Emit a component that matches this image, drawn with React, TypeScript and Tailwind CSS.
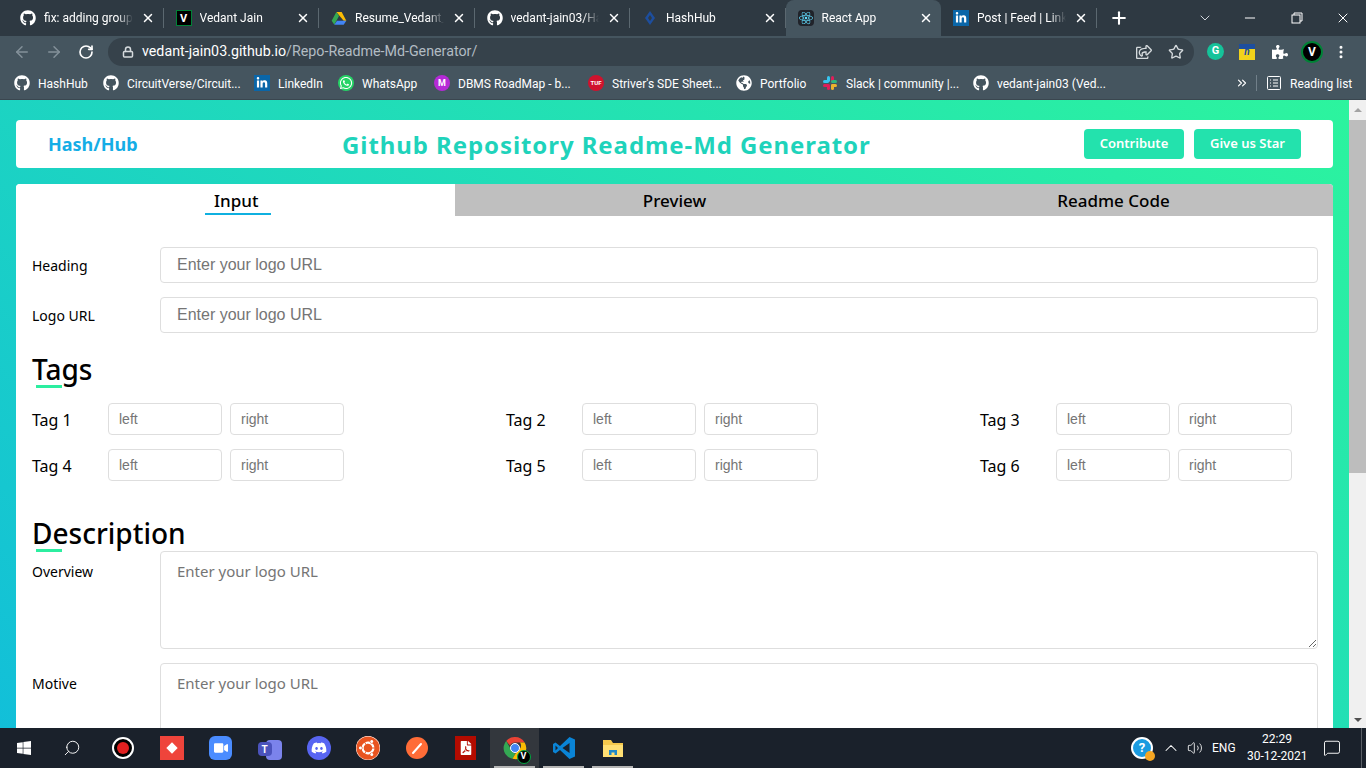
import React from 'react';
import { ArrowLeft, ArrowRight, RotateCw, Star, EllipsisVertical, Plus, Minus, X, ChevronDown, ChevronUp, Volume2, Search, Lock, ChevronsRight, MessageSquare } from 'lucide-react';
import { FaGithub, FaLinkedinIn, FaWhatsapp, FaWindows, FaDiscord, FaUbuntu, FaReact, FaPuzzlePiece, FaGlobeAmericas, FaFilePdf, FaVideo, FaRegShareSquare } from 'react-icons/fa';

const UI = "font-['Noto_Sans','Open_Sans',sans-serif]";
const CHROME_FONT = "font-['Roboto','Noto_Sans',sans-serif]";

const VLogo = ({ size = 16 }: { size?: number }) => (
  <span
    className="flex items-center justify-center bg-black border border-green-700 text-white font-bold text-[11px] leading-none shrink-0"
    style={{ width: size, height: size }}
  >
    V
  </span>
);

const Drive = () => (
  <svg viewBox="0 0 24 24" className="w-4 h-4 shrink-0">
    <polygon points="8,3 16,3 23,16 19,16" fill="#fbbc04" />
    <polygon points="8,3 1,16 5,22 12,9" fill="#34a853" />
    <polygon points="5,22 19,22 23,16 9,16" fill="#4285f4" />
  </svg>
);

const Hash = () => (
  <svg viewBox="0 0 16 16" className="w-4 h-4 shrink-0">
    <polygon points="8,1 13,8 8,15 3,8" fill="#1d4e9e" />
    <polygon points="8,5 10,8 8,11 6,8" fill="#2f3b44" />
  </svg>
);

const Linked = () => (
  <span className="w-4 h-4 bg-[#0a66a8] flex items-center justify-center shrink-0">
    <FaLinkedinIn className="w-3 h-3 text-white" />
  </span>
);

const tabs = [
  { icon: <FaGithub className="w-4 h-4 text-white shrink-0" />, title: 'fix: adding group chat' },
  { icon: <VLogo />, title: 'Vedant Jain' },
  { icon: <Drive />, title: 'Resume_Vedant_Jain' },
  { icon: <FaGithub className="w-4 h-4 text-white shrink-0" />, title: 'vedant-jain03/HashHub' },
  { icon: <Hash />, title: 'HashHub' },
  { icon: <span className="w-4 h-4 bg-[#20232a] rounded-sm flex items-center justify-center shrink-0"><FaReact className="w-3.5 h-3.5 text-[#61dafb]" /></span>, title: 'React App', active: true },
  { icon: <Linked />, title: 'Post | Feed | LinkedIn' },
];

const Slack = () => (
  <svg viewBox="0 0 16 16" className="w-4 h-4 shrink-0">
    <rect x="5" y="1" width="3" height="6" rx="1.5" fill="#36c5f0" />
    <rect x="1" y="5" width="6" height="3" rx="1.5" fill="#36c5f0" />
    <rect x="9" y="1" width="3" height="6" rx="1.5" fill="#e01e5a" />
    <rect x="9" y="5" width="6" height="3" rx="1.5" fill="#2eb67d" />
    <rect x="1" y="9" width="6" height="3" rx="1.5" fill="#e01e5a" />
    <rect x="5" y="9" width="3" height="6" rx="1.5" fill="#e01e5a" />
    <rect x="9" y="9" width="6" height="3" rx="1.5" fill="#ecb22e" />
    <rect x="9" y="9" width="3" height="6" rx="1.5" fill="#ecb22e" />
  </svg>
);

const GH = <FaGithub className="w-4 h-4 text-white shrink-0" />;

const bookmarks = [
  { icon: GH, label: 'HashHub', w: 'w-[89px]' },
  { icon: GH, label: 'CircuitVerse/Circuit...', w: 'w-[151px]' },
  { icon: <Linked />, label: 'LinkedIn', w: 'w-[84px]' },
  { icon: <span className="w-4 h-4 rounded-full bg-[#25d366] flex items-center justify-center shrink-0"><FaWhatsapp className="w-3.5 h-3.5 text-white" /></span>, label: 'WhatsApp', w: 'w-[96px]' },
  { icon: <span className="w-4 h-4 rounded-full bg-[#b52ad6] text-white text-[9px] font-bold flex items-center justify-center shrink-0">M</span>, label: 'DBMS RoadMap - b...', w: 'w-[154px]' },
  { icon: <span className="w-4 h-4 rounded-full bg-[#d0122d] text-white text-[6px] font-bold flex items-center justify-center shrink-0">TUF</span>, label: "Striver's SDE Sheet...", w: 'w-[148px]' },
  { icon: <FaGlobeAmericas className="w-4 h-4 text-white shrink-0" />, label: 'Portfolio', w: 'w-[86px]' },
  { icon: <Slack />, label: 'Slack | community |...', w: 'w-[151px]' },
  { icon: GH, label: 'vedant-jain03 (Ved...', w: 'w-[140px]' },
];

const BrowserChrome = () => (
  <div className={`${CHROME_FONT} text-white shrink-0`}>
    {/* Tab strip */}
    <div className="h-9 bg-[#2e3942] flex items-center pl-2">
      {tabs.map((tab) => (
        <div
          key={tab.title}
          className={`w-[155.5px] h-9 pl-3 pr-2 flex items-center gap-2 shrink-0 ${tab.active ? 'bg-[#45555f] rounded-t-lg' : 'border-r border-[#5b6870] h-[20px]'}`}
        >
          {tab.icon}
          <span className="flex-1 overflow-hidden whitespace-nowrap text-xs pb-px [mask-image:linear-gradient(to_left,transparent,black_16px)]">{tab.title}</span>
          <X className="w-3.5 h-3.5 shrink-0" strokeWidth={2.5} />
        </div>
      ))}
      <Plus className="w-5 h-5 ml-3 shrink-0" strokeWidth={2.5} />
      <div className="ml-auto flex items-center">
        <ChevronDown className="w-4 h-4 mr-[29px] text-gray-300" strokeWidth={1.5} />
        <Minus className="w-4 h-4 mr-[33px]" strokeWidth={1.5} />
        <svg viewBox="0 0 12 12" className="w-3 h-3 mr-[32px]" fill="none" stroke="white">
          <rect x="1" y="3" width="8" height="8" />
          <path d="M3 3V1h8v8H9" />
        </svg>
        <X className="w-4 h-4 mr-[15px]" strokeWidth={1.5} />
      </div>
    </div>

    {/* Toolbar */}
    <div className="h-[31px] bg-[#45555f] flex items-center">
      <ArrowLeft className="w-[18px] h-[18px] ml-[13px] text-[#84919a]" />
      <ArrowRight className="w-[18px] h-[18px] ml-[14px] text-[#84919a]" />
      <RotateCw className="w-4 h-4 ml-[15px]" strokeWidth={2.5} />
      <div className="ml-[14px] w-[1086px] h-[28px] rounded-full bg-[#36424b] flex items-center pl-[14px] pr-[10px]">
        <Lock className="w-3 h-3 text-[#d5dadd]" strokeWidth={3} />
        <span className="ml-[8px] text-[14.25px]">vedant-jain03.github.io<span className="text-[#b2bcc3]">/Repo-Readme-Md-Generator/</span></span>
        <FaRegShareSquare className="w-4 h-4 ml-auto text-[#d5dadd]" />
        <Star className="w-4 h-4 ml-[16px] text-[#d5dadd]" />
      </div>
      <span className="ml-[13px] w-[17px] h-[17px] rounded-full bg-[#15c39a] text-white text-[11px] font-bold flex items-center justify-center">G</span>
      <span className="ml-[15px] w-4 h-4 bg-[linear-gradient(#1d4e9e_30%,#f2d31b_30%)] text-[#1d4e9e] text-[10px] italic font-bold flex items-center justify-center">n</span>
      <FaPuzzlePiece className="ml-[17px] w-4 h-4 text-white" />
      <span className="ml-[13px] w-[22px] h-[22px] rounded-full bg-black border-2 border-green-700 text-white text-xs font-bold flex items-center justify-center">V</span>
      <EllipsisVertical className="ml-[10px] w-4 h-4" strokeWidth={2.5} />
    </div>

    {/* Bookmarks */}
    <div className="h-[33px] bg-[#45555f] flex items-center pl-[14px] text-xs border-b border-[#3a464f]">
      {bookmarks.map((b) => (
        <div key={b.label} className={`${b.w} flex items-center gap-2 shrink-0 whitespace-nowrap`}>
          {b.icon}
          <span className="pt-px">{b.label}</span>
        </div>
      ))}
      <ChevronsRight className="w-3.5 h-3.5 ml-[122px]" />
      <div className="w-px h-4 bg-[#71808a] ml-[7px]" />
      <svg viewBox="0 0 14 14" className="w-[14px] h-[14px] ml-[10px]" fill="none" stroke="white">
        <rect x="0.5" y="0.500" width="13" height="13" rx="1" />
        <path d="M3 4h1M6 4h5M3 7h1M6 7h5M3 10h1M6 10h5" />
      </svg>
      <span className="ml-[9px] pt-px whitespace-nowrap">Reading list</span>
    </div>
  </div>
);

const fieldInput = "flex-1 h-9 min-w-0 rounded border border-[#dedede] bg-white px-4 text-base font-['Liberation_Sans',sans-serif] placeholder:text-[#757575] outline-none";
const tagInput = "w-[114px] h-8 rounded border border-[#dedede] bg-white px-[10px] text-sm font-['Liberation_Sans',sans-serif] placeholder:text-[#757575] outline-none";
const area = "flex-1 min-w-0 h-[98px] rounded border border-[#dedede] bg-white px-4 py-2 text-[15px] placeholder:text-[#757575] outline-none block";

const SectionTitle = ({ children }: { children: React.ReactNode }) => (
  <h2 className="relative text-[28px] leading-[38px] font-medium text-black">
    {children}
    <span className="absolute left-1 bottom-0 w-[26px] h-[3px] bg-[#2ceea0]" />
  </h2>
);

const TagField = ({ n }: { n: number }) => (
  <div className="flex items-center">
    <span className="w-[76px] text-base text-black pt-[2px]">Tag {n}</span>
    <input className={tagInput} placeholder="left" />
    <input className={`${tagInput} ml-2`} placeholder="right" />
  </div>
);

const Page = () => (
  <div className={`${UI} flex-1 min-h-0 flex overflow-hidden`}>
    <div className="flex-1 min-w-0 px-4 pt-5 bg-[linear-gradient(36deg,#12bfd9,#2cf49e)] overflow-hidden">
      {/* Navbar */}
      <div className="h-12 w-[1317px] bg-white rounded flex items-center pl-8">
        <span className="text-lg font-bold text-[#15ade6] w-[294px]">Hash/Hub</span>
        <span className="text-2xl font-bold text-[#1fd3bb] tracking-[0.92px] whitespace-nowrap pt-0.5">Github Repository Readme-Md Generator</span>
        <div className="ml-auto flex gap-[10px] pr-8">
          <button className="w-[100px] h-[30px] rounded-sm bg-[#23e2ad] text-white text-[13px] font-semibold">Contribute</button>
          <button className="w-[107px] h-[30px] rounded-sm bg-[#23e2ad] text-white text-[13px] font-semibold">Give us Star</button>
        </div>
      </div>

      {/* Card */}
      <div className="mt-4 w-[1317px] bg-white rounded-t">
        <div className="grid grid-cols-3 h-8 text-[17px] font-medium text-black rounded-t overflow-hidden">
          <div className="flex justify-center items-center bg-white">
            <span className="relative w-[66px] ml-[5px] pl-[9px] pt-px leading-8">
              Input
              <span className="absolute left-0 right-0 bottom-[2px] h-0.5 bg-[#0fb0e0]" />
            </span>
          </div>
          <div className="flex justify-center items-center bg-[#bfbfbf] pt-px">Preview</div>
          <div className="flex justify-center items-center bg-[#bfbfbf] pt-px">Readme Code</div>
        </div>

        <div className="pl-4 pr-[15px] pt-[31px]">
          <div className="flex items-center">
            <span className="w-32 text-sm text-black pt-[2px]">Heading</span>
            <input className={fieldInput} placeholder="Enter your logo URL" />
          </div>
          <div className="flex items-center mt-[14px]">
            <span className="w-32 text-sm text-black pt-[2px]">Logo URL</span>
            <input className={fieldInput} placeholder="Enter your logo URL" />
          </div>

          <div className="mt-[17px]">
            <SectionTitle>Tags</SectionTitle>
          </div>
          <div className="grid grid-cols-[474px_474px_1fr] gap-y-[14px] mt-[15px]">
            {[1, 2, 3, 4, 5, 6].map((n) => (
              <TagField key={n} n={n} />
            ))}
          </div>

          <div className="mt-[33px]">
            <SectionTitle>Description</SectionTitle>
          </div>
          <div className="flex -mt-[1px]">
            <span className="w-32 text-sm text-black pt-[11px]">Overview</span>
            <textarea className={area} placeholder="Enter your logo URL" />
          </div>
          <div className="flex mt-[14px]">
            <span className="w-32 text-sm text-black pt-[11px]">Motive</span>
            <textarea className={area} placeholder="Enter your logo URL" />
          </div>
        </div>
      </div>
    </div>

    {/* Scrollbar */}
    <div className="w-[17px] shrink-0 bg-[#f0f0f0] flex flex-col items-center">
      <div className="h-[20px] flex items-center justify-center">
        <div className="w-0 h-0 border-x-[4px] border-x-transparent border-b-[4px] border-b-[#a3a3a3]" />
      </div>
      <div className="w-full h-[353px] bg-[#bdbdbd]" />
      <div className="mt-auto h-[17px] flex items-center justify-center">
        <div className="w-0 h-0 border-x-[4px] border-x-transparent border-t-[4px] border-t-[#505050]" />
      </div>
    </div>
  </div>
);

const TaskBtn = ({ children, active, line }: { children: React.ReactNode; active?: boolean; line?: boolean }) => (
  <div className={`relative w-[49px] h-10 flex items-center justify-center shrink-0 ${active ? 'bg-[#33373d]' : ''}`}>
    {children}
    {line && <span className="absolute bottom-0 left-1 right-1 h-0.5 bg-[#b5b5b5]" />}
  </div>
);

const Chrome = () => (
  <svg viewBox="0 0 24 24" className="w-6 h-6">
    <path d="M12 1a11 11 0 0 1 9.6 5.5H12a5.5 5.5 0 0 0-5 3L3.2 4.9A11 11 0 0 1 12 1z" fill="#ea4335" />
    <path d="M3.2 4.9 8 13.5a5.5 5.5 0 0 0 4.5 4l-3 5.3A11 11 0 0 1 3.2 4.9z" fill="#34a853" />
    <path d="M21.6 6.5A11 11 0 0 1 9.500 22.800l4.500-7.800a5.500 5.500 0 0 0 3-8.500z" fill="#fbbc04" />
    <circle cx="12" cy="12" r="4.500" fill="#4285f4" stroke="white" />
  </svg>
);

const Taskbar = () => (
  <div className={`${CHROME_FONT} h-10 shrink-0 bg-[#1a212b] flex items-center text-white`}>
    <div className="w-12 flex justify-center"><FaWindows className="w-4 h-4" /></div>
    <div className="w-12 flex justify-center"><Search className="w-[18px] h-[18px] -scale-x-100" strokeWidth={1.25} /></div>
    <div className="w-0.5" />
    <TaskBtn><span className="w-[22px] h-[22px] rounded-full border-2 border-white bg-black flex items-center justify-center"><span className="w-3 h-3 rounded-full bg-[#e02020]" /></span></TaskBtn>
    <TaskBtn><span className="w-6 h-6 bg-[#ef443b] flex items-center justify-center"><span className="w-2 h-2 rotate-45 bg-white" /></span></TaskBtn>
    <TaskBtn><span className="w-[23px] h-6 rounded-md bg-[#4a8cff] flex items-center justify-center"><FaVideo className="w-3.5 h-3.5 text-white" /></span></TaskBtn>
    <TaskBtn><span className="relative w-6 h-6"><span className="absolute right-0 top-1 w-4 h-5 rounded bg-[#7b83eb]" /><span className="absolute left-0 top-1.5 w-3.5 h-3.5 rounded-sm bg-[#4b53bc] text-[10px] font-bold flex items-center justify-center">T</span></span></TaskBtn>
    <TaskBtn><span className="w-6 h-6 rounded-full bg-[#5865f2] flex items-center justify-center"><FaDiscord className="w-4 h-4" /></span></TaskBtn>
    <TaskBtn><span className="w-6 h-6 rounded-full bg-[#e95420] flex items-center justify-center"><FaUbuntu className="w-6 h-6 text-[#e95420] bg-white rounded-full" /></span></TaskBtn>
    <TaskBtn>
      <span className="w-[22px] h-[22px] rounded-full bg-[#ff6c37] flex items-center justify-center">
        <svg viewBox="0 0 16 16" className="w-4 h-4"><path d="M4 13 12 4" stroke="white" strokeWidth="2" strokeLinecap="round" /></svg>
      </span>
    </TaskBtn>
    <TaskBtn><span className="w-[21px] h-6 bg-[#b30b00] flex items-center justify-center"><FaFilePdf className="w-3.5 h-3.5 text-white" /></span></TaskBtn>
    <TaskBtn active line>
      <span className="relative">
        <Chrome />
        <span className="absolute -right-1 -bottom-1 w-[14px] h-[14px] rounded-full bg-black border border-green-600 text-[9px] font-bold flex items-center justify-center">V</span>
      </span>
    </TaskBtn>
    <TaskBtn line>
      <svg viewBox="0 0 24 24" className="w-6 h-6">
        <path d="M17.500 1 8 10 3.500 6.500 1 8v8l2.500 1.500L8 14l9.500 9 5.500-2.500v-17z" fill="#0a84d6" />
        <path d="M17.500 7v10L10.500 12z" fill="#1a212b" />
        <path d="M3.500 9.500 6 12l-2.500 2.500z" fill="#1a212b" />
      </svg>
    </TaskBtn>
    <TaskBtn line>
      <svg viewBox="0 0 24 24" className="w-6 h-6">
        <path d="M2 4h8l2 3h10v14H2z" fill="#f5c84c" />
        <rect x="2" y="9" width="20" height="12" fill="#ffdf73" />
        <rect x="8" y="14" width="8" height="5" fill="#1e88c9" />
        <rect x="10.500" y="16.500" width="3" height="2.500" fill="#ffdf73" />
      </svg>
    </TaskBtn>

    <div className="ml-auto flex items-center h-full">
      <span className="relative w-[22px] h-[22px] rounded-full bg-[#1a9be0] border-2 border-white text-[13px] font-bold flex items-center justify-center">
        ?
        <span className="absolute -right-1 -bottom-1 w-[10px] h-[10px] rounded-full bg-[#f5a623]" />
      </span>
      <ChevronUp className="w-5 h-5 ml-[8px]" strokeWidth={1.25} />
      <Volume2 className="w-4 h-4 ml-[6px]" strokeWidth={1.25} />
      <span className="ml-[9px] w-6 text-xs">ENG</span>
      <div className="ml-[11px] w-[60px] text-center text-xs leading-[17px] whitespace-nowrap">
        <div>22:29</div>
        <div>30-12-2021</div>
      </div>
      <MessageSquare className="w-[18px] h-[18px] ml-[16px] mr-[20px]" strokeWidth={1.25} />
      <div className="w-px h-full bg-[#5a5f66] mr-1" />
    </div>
  </div>
);

export default function App() {
  return (
    <div className="h-screen w-full flex flex-col overflow-hidden">
      <BrowserChrome />
      <Page />
      <Taskbar />
    </div>
  );
}
